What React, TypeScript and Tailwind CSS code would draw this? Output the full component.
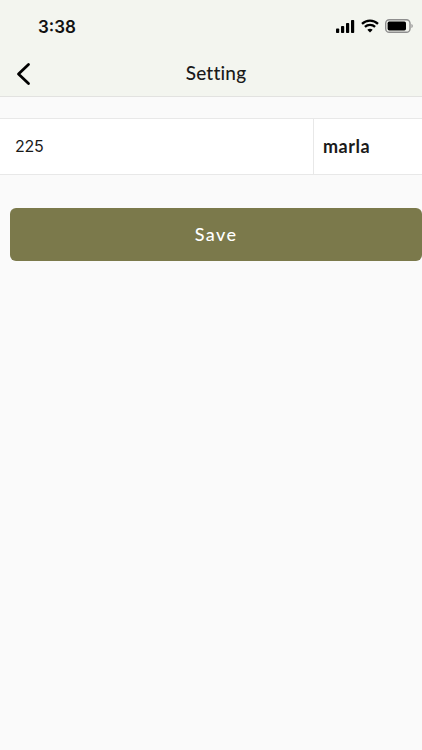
const font = "font-['Lato','Noto_Sans',sans-serif]";

function Signal() {
  return (
    <svg width="19" height="13" viewBox="0 0 19 13" fill="#000">
      <rect x="0" y="8.5" width="3.2" height="4.5" rx="0.8" />
      <rect x="5" y="6" width="3.2" height="7" rx="0.8" />
      <rect x="10" y="3" width="3.2" height="10" rx="0.8" />
      <rect x="15" y="0" width="3.2" height="13" rx="0.8" />
    </svg>
  );
}

function Wifi() {
  return (
    <svg width="18" height="14" viewBox="0 0 18 14" fill="none" stroke="#000" strokeWidth="2.3">
      <path d="M1 4.9C5.5 .6 12.5 .6 17 4.9" />
      <path d="M3.9 7.9C6.8 5.2 11.2 5.2 14.1 7.9" />
      <path d="M9 13.5L6.3 10.8C7.8 9.5 10.2 9.5 11.7 10.8Z" fill="#000" stroke="none" />
    </svg>
  );
}

function Battery() {
  return (
    <svg width="28" height="14" viewBox="0 0 28 14" fill="none">
      <rect x="0.7" y="0.7" width="24.3" height="12.6" rx="3.6" stroke="#8e8e8e" strokeWidth="1.4" />
      <rect x="2.6" y="2.6" width="18.4" height="8.8" rx="1.6" fill="#000" />
      <path d="M26.4 5v4c.9-.3 1.4-1.1 1.4-2s-.5-1.7-1.4-2z" fill="#9a9a9a" />
    </svg>
  );
}

export default function App() {
  return (
    <div className={`min-h-screen h-[750px] bg-[#fafafa] ${font}`}>
      {/* Top Bar */}
      <header className="h-[97px] bg-[#f3f5ef] border-b border-[#e2e2e0] flex flex-col">
        <div className="h-[50px] pt-[14px] pl-[38px] pr-[9px] flex items-start justify-between">
          <span className="font-['Inter',sans-serif] text-[17px] leading-[26px] font-semibold text-[#111]">3:38</span>
          <div className="flex items-center gap-[6px] pt-[5px]">
            <Signal />
            <Wifi />
            <Battery />
          </div>
        </div>
        <div className="relative flex-1 flex items-center justify-center pl-[10px]">
          <svg className="absolute left-[15px] top-[11px]" width="16" height="25" viewBox="0 0 16 25" fill="none" stroke="#000" strokeWidth="2.8" strokeLinecap="round" strokeLinejoin="round">
            <path d="M13.5 3.5L3.5 13L13.5 22.5" />
          </svg>
          <span className="text-[19px] leading-[24px] font-medium text-[#1a1a1a] tracking-[0.2px]">Setting</span>
        </div>
      </header>

      {/* Form */}
      <div className="mt-[21px] h-[57px] bg-white border-y border-[#e8e8e8] flex">
        <div className="flex-1 flex items-center pl-[15px] font-['Inter',sans-serif] text-[16px] tracking-[-0.3px] text-[#1a1a1a] pb-[1px]">225</div>
        <div className="w-[109px] border-l border-[#e8e8e8] flex items-center pl-[9px] text-[18px] tracking-[0.5px] font-bold text-[#1a1a1a] pb-[1px]">marla</div>
      </div>

      <div className="mt-[33px] ml-[10px]">
        <button className="w-full h-[53px] bg-[#7b794b] rounded-[6px] text-white text-[18px] font-medium tracking-[1.4px]">Save</button>
      </div>
    </div>
  );
}
